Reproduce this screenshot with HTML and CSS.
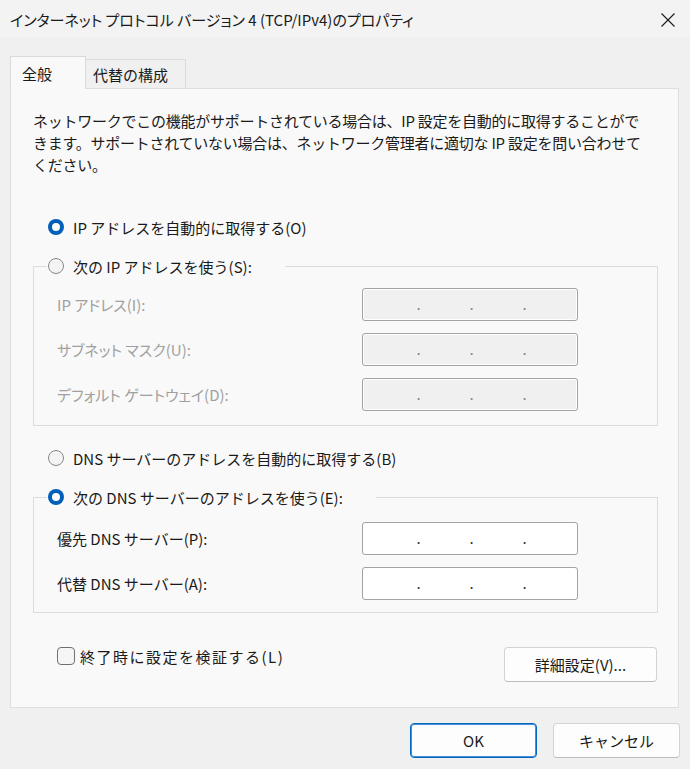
FILE: index.html
```html
<!DOCTYPE html>
<html lang="ja">
<head>
<meta charset="utf-8">
<title>インターネット プロトコル バージョン 4 (TCP/IPv4)のプロパティ</title>
<link rel="stylesheet" href="styles.css">
</head>
<body>
<div class="window">
  <header class="titlebar">
    <span class="title">インターネット プロトコル バージョン 4 (TCP/IPv4)のプロパティ</span>
    <span class="close" aria-label="閉じる">
      <svg width="16" height="16" viewBox="0 0 16 16"><path d="M1.5 1.5L14.5 14.5M14.5 1.5L1.5 14.5" stroke="#1a1a1a" stroke-width="1.1" fill="none"/></svg>
    </span>
  </header>

  <nav class="tabs">
    <div class="tab active">全般</div>
    <div class="tab">代替の構成</div>
  </nav>

  <section class="panel">
    <p class="desc">ネットワークでこの機能がサポートされている場合は、IP 設定を自動的に取得することがで<br>きます。サポートされていない場合は、ネットワーク管理者に適切な IP 設定を問い合わせて<br>ください。</p>

    <div class="radio-row first"><span class="radio checked"></span><span>IP アドレスを自動的に取得する(O)</span></div>

    <fieldset class="group group-ip">
      <legend><span class="radio"></span><span>次の IP アドレスを使う(S):</span></legend>
      <div class="field-row disabled r1"><span class="flabel">IP アドレス(I):</span><span class="ip"><span class="dot">.</span><span class="dot">.</span><span class="dot">.</span></span></div>
      <div class="field-row disabled"><span class="flabel">サブネット マスク(U):</span><span class="ip"><span class="dot">.</span><span class="dot">.</span><span class="dot">.</span></span></div>
      <div class="field-row disabled"><span class="flabel">デフォルト ゲートウェイ(D):</span><span class="ip"><span class="dot">.</span><span class="dot">.</span><span class="dot">.</span></span></div>
    </fieldset>

    <div class="radio-row dns-auto"><span class="radio"></span><span>DNS サーバーのアドレスを自動的に取得する(B)</span></div>

    <fieldset class="group group-dns">
      <legend><span class="radio checked"></span><span>次の DNS サーバーのアドレスを使う(E):</span></legend>
      <div class="field-row r1"><span class="flabel">優先 DNS サーバー(P):</span><span class="ip"><span class="dot">.</span><span class="dot">.</span><span class="dot">.</span></span></div>
      <div class="field-row"><span class="flabel">代替 DNS サーバー(A):</span><span class="ip"><span class="dot">.</span><span class="dot">.</span><span class="dot">.</span></span></div>
    </fieldset>

    <div class="bottom-row">
      <div class="check-row"><span class="checkbox"></span><span class="check-label">終了時に設定を検証する(L)</span></div>
      <button class="btn advanced">詳細設定(V)...</button>
    </div>
  </section>

  <footer class="footer">
    <button class="btn default">OK</button>
    <button class="btn">キャンセル</button>
  </footer>
</div>
</body>
</html>
```

FILE: styles.css
```css
* { box-sizing: border-box; }

body {
  margin: 0;
  background: #f0f0f0;
  font-family: "Noto Sans CJK JP", "Noto Sans", sans-serif;
  font-size: 15px;
  color: #1a1a1a;
}

.window {
  width: 690px;
  height: 769px;
  display: flex;
  flex-direction: column;
}

.titlebar {
  height: 37px;
  background: #f3f3f3;
  display: flex;
  align-items: center;
  justify-content: space-between;
  padding: 2px 14px 0 10px;
}

.title {
  font-size: 15px;
  font-feature-settings: "palt";
  color: #1a1a1a;
}

.close { display: flex; }

.tabs {
  display: flex;
  align-items: flex-end;
  margin: 19px 0 0 10px;
}

.tab {
  display: flex;
  align-items: center;
  border: 1px solid #dadada;
  border-bottom: none;
  background: #f0f0f0;
  height: 29px;
  width: 101px;
  padding-left: 7px;
  margin-left: -1px;
}

.tab.active {
  position: relative;
  z-index: 1;
  width: 76px;
  height: 33px;
  padding-left: 11px;
  margin-left: 0;
  margin-bottom: -1px;
  background: #f9f9f9;
}

.panel {
  margin-left: 10px;
  width: 669px;
  height: 620px;
  background: #f9f9f9;
  border: 1px solid #dedede;
  display: flex;
  flex-direction: column;
}

.desc {
  margin: 21px 0 0 22px;
  line-height: 22px;
  white-space: nowrap;
  letter-spacing: -0.25px;
}

.radio-row {
  display: flex;
  align-items: center;
  height: 22px;
  margin-left: 37px;
}
.radio-row.first { margin-top: 40px; }
.radio-row.dns-auto { margin-top: 21px; }

.radio {
  flex: none;
  width: 16px;
  height: 16px;
  border-radius: 50%;
  border: 1px solid #878787;
  background: #f4f4f4;
  margin-right: 9px;
  display: flex;
  align-items: center;
  justify-content: center;
}
.radio.checked {
  border: none;
  background: #005fb8;
}
.radio.checked::after {
  content: "";
  width: 8px;
  height: 8px;
  border-radius: 50%;
  background: #ffffff;
}

.group {
  margin: 17px 0 0 22px;
  width: 625px;
  min-width: 0;
  border: 1px solid #dcdcdc;
  padding: 0;
}
.group-ip { padding-bottom: 14px; }
.group-dns { padding-bottom: 12px; }

.group legend {
  display: flex;
  align-items: center;
  height: 22px;
  margin-left: 13px;
  padding: 0 33px 0 1px;
}

.field-row {
  display: flex;
  align-items: center;
  height: 33px;
  padding-left: 23px;
  margin-top: 12px;
}
.group-ip .field-row.r1 { margin-top: 11px; }
.group-dns .field-row.r1 { margin-top: 14px; }

.flabel { width: 305px; flex: none; }

.ip {
  width: 216px;
  height: 33px;
  border: 1px solid #a3a3a3;
  border-radius: 3px;
  background: #ffffff;
  display: flex;
  align-items: flex-end;
  padding: 0 0 7px 53px;
  gap: 48px;
  color: #333;
  line-height: 18px;
}
.dot { width: 5px; text-align: center; }

.field-row.disabled .flabel {
  color: #a0a0a0;
  font-feature-settings: "palt";
}
.field-row.disabled .ip {
  background: #f0f0f0;
  box-shadow: inset 0 0 0 1px #ffffff;
  color: #7a8a9a;
}

.bottom-row {
  display: flex;
  justify-content: space-between;
  align-items: flex-start;
  margin: 32px 21px 0 46px;
}

.check-row {
  display: flex;
  align-items: center;
  height: 22px;
}

.check-label { letter-spacing: 1.5px; }

.checkbox {
  width: 18px;
  height: 18px;
  border: 1px solid #707070;
  border-radius: 4px;
  background: #f5f5f5;
  margin-right: 5px;
}

.btn {
  font-family: inherit;
  font-size: 15px;
  color: #1a1a1a;
  height: 35px;
  background: #fdfdfd;
  border: 1px solid #d3d3d3;
  border-bottom-color: #bdbdbd;
  border-radius: 4px;
  padding: 0;
}

.btn.advanced {
  width: 153px;
  margin-top: 2px;
}

.footer {
  display: flex;
  justify-content: flex-end;
  gap: 16px;
  margin-top: 15px;
  padding-right: 10px;
}
.footer .btn { width: 127px; }
.btn.default {
  border: 1px solid #0067c0;
  box-shadow: inset 0 0 0 1px #4a8fd6;
}
```
